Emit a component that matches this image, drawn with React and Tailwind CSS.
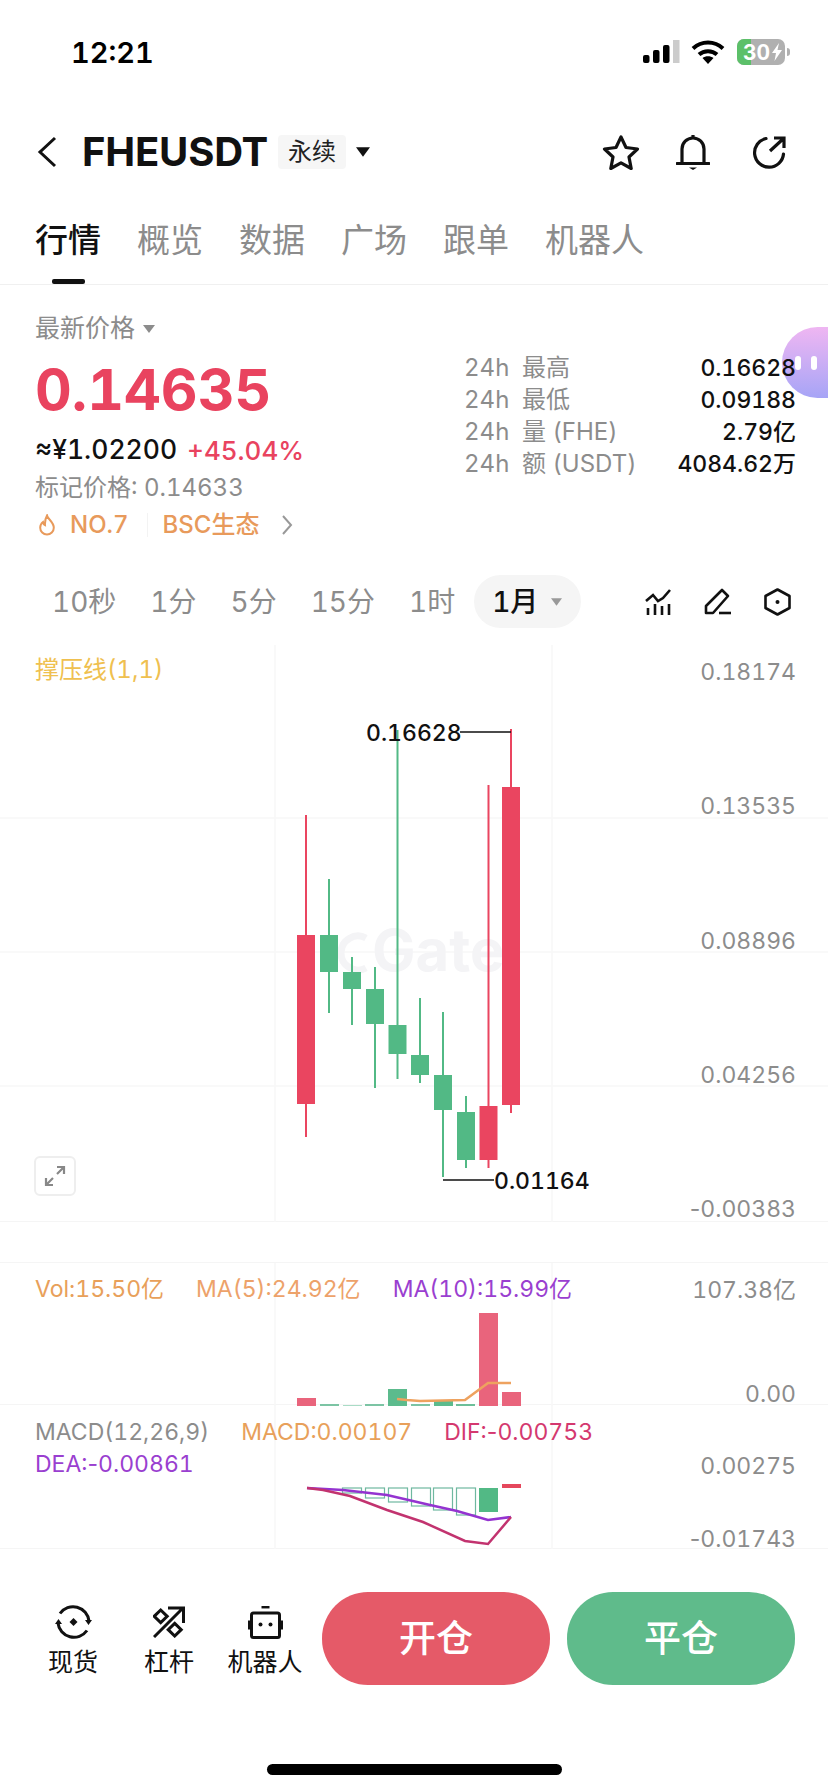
import React from "react";

const tabs = ["行情", "概览", "数据", "广场", "跟单", "机器人"];
const intervals = ["10秒", "1分", "5分", "15分", "1时"];
const stats = [
  { label: "最高", value: "0.16628" },
  { label: "最低", value: "0.09188" },
  { label: "量 (FHE)", value: "2.79亿" },
  { label: "额 (USDT)", value: "4084.62万" },
];

// x = wick centre, body top/bottom and wick top/bottom, all in page pixels
const candles = [
  { x: 306, top: 935, bottom: 1104, high: 815, low: 1137, up: true },
  { x: 329, top: 935, bottom: 972, high: 879, low: 1013 },
  { x: 352, top: 972, bottom: 989, high: 957, low: 1025 },
  { x: 375, top: 989, bottom: 1024, high: 967, low: 1088 },
  { x: 397.5, top: 1025, bottom: 1054, high: 730, low: 1079 },
  { x: 420, top: 1055, bottom: 1075, high: 998, low: 1083 },
  { x: 443, top: 1075, bottom: 1110, high: 1012, low: 1177 },
  { x: 466, top: 1112, bottom: 1160, high: 1096, low: 1168 },
  { x: 488.5, top: 1106, bottom: 1160, high: 785, low: 1168, up: true },
  { x: 511, top: 787, bottom: 1105, high: 729, low: 1113, up: true },
];

const volBars = [
  { x: 297, top: 1397, color: "#e9647c" },
  { x: 320, top: 1403, color: "#7cc4a4" },
  { x: 343, top: 1404, color: "#a9dcc6" },
  { x: 365, top: 1403, color: "#7cc4a4" },
  { x: 388, top: 1388, color: "#5cbb8d" },
  { x: 411, top: 1403, color: "#7cc4a4" },
  { x: 434, top: 1400, color: "#5cbb8d" },
  { x: 456, top: 1403, color: "#6cbf99" },
  { x: 479, top: 1312, color: "#e9647c" },
  { x: 502, top: 1391, color: "#e9647c" },
];

const macdBoxes = [
  { x: 342, bottom: 1493 },
  { x: 365, bottom: 1498 },
  { x: 388, bottom: 1502 },
  { x: 411, bottom: 1506 },
  { x: 433, bottom: 1510 },
  { x: 456, bottom: 1515 },
];

const Flame = () => (
  <svg width="18" height="22" viewBox="0 0 18 22" fill="none" stroke="#e89a5b" strokeWidth="2">
    <path d="M9 1.500c.6 3.400 6.800 6.600 6.800 12.200A6.800 6.800 0 0 1 9 20.500a6.800 6.800 0 0 1-6.800-6.800c0-2.600 1.300-4.500 2.800-5.700.3 1.600 1 2.500 2 3C6.800 7.500 7.500 4 9 1.500z" />
  </svg>
);

const Triangle = ({ className }) => (
  <svg className={className} viewBox="0 0 12 8">
    <path d="M0 0h12L6 8z" fill="currentColor" />
  </svg>
);

// Inter's tabular figures also widen the hyphen, so it is set apart
const Minus = () => <span className="normal-nums">-</span>;

const NavItem = ({ label, children }) => (
  <div className="w-[96px] self-stretch pt-[12px] flex flex-col items-center">
    <div className="h-[36px] flex items-center justify-center">{children}</div>
    <span className="mt-[7px] text-[25px] leading-[30px]">{label}</span>
  </div>
);

const App = () => {
  return (
    <div className="w-[828px] h-[1792px] bg-white overflow-hidden flex flex-col relative text-[#111] tabular-nums [font-family:Inter,'Noto_Sans_CJK_SC',sans-serif]">
      {/* status bar */}
      <div className="h-[104px] shrink-0 flex items-center justify-between pl-[71px] pr-[38px]">
        <span className="mt-[2px] text-[29px] font-semibold text-black">12:21</span>
        <div className="flex items-center">
          <svg width="37" height="24" viewBox="0 0 37 24" className="mr-[11px]">
            <rect x="0" y="15" width="6.500" height="8" rx="2" fill="#000" />
            <rect x="10" y="10" width="6.500" height="13" rx="2" fill="#000" />
            <rect x="20" y="5" width="6.500" height="18" rx="2" fill="#000" />
            <rect x="30" y="0" width="6.500" height="23" fill="#ccc" />
          </svg>
          <svg width="34" height="26" viewBox="0 0 34 26" className="mr-[12px]" fill="none" stroke="#000" strokeWidth="4">
            <path d="M2 9.500C10.500 1.500 23.500 1.500 32 9.500" />
            <path d="M8 15.500c5-4.500 13-4.500 18 0" />
            <path d="M17 25l-5.500-6c3-2.500 8-2.500 11 0z" fill="#000" stroke="none" />
          </svg>
          <div className="w-[48px] h-[26px] rounded-[7px] bg-[#b0b0b0] overflow-hidden relative flex items-center justify-center">
            <div className="absolute left-0 top-0 bottom-0 w-[14px] bg-[#5cc069]" />
            <span className="relative text-white text-[21px] font-bold leading-none -ml-[9px]">30</span>
            <svg width="10" height="18" viewBox="0 0 10 18" className="absolute right-[3px] top-[4px]">
              <path d="M7 0L0 10h4l-1.500 8L10 7H5.500z" fill="#fff" />
            </svg>
          </div>
          <div className="w-[3px] h-[8px] bg-[#b0b0b0] rounded-r-full ml-[2px]" />
        </div>
      </div>

      {/* header */}
      <div className="h-[96px] shrink-0 flex items-center pl-[37px] pr-[42px]">
        <svg width="20" height="32" viewBox="0 0 20 32" fill="none" stroke="#111" strokeWidth="3">
          <path d="M18 2L3 16l15 14" />
        </svg>
        <span className="ml-[25px] text-[40px] font-bold tracking-[-0.2px]">FHEUSDT</span>
        <span className="ml-[10px] h-[34px] w-[68px] bg-[#f6f6f6] rounded-[4px] flex items-center justify-center text-[24px] text-[#222]">永续</span>
        <Triangle className="ml-[10px] w-[14px] h-[10px] text-[#111]" />
        <div className="ml-auto flex items-center">
          <svg width="38" height="36" viewBox="0 0 38 36" fill="none" stroke="#111" strokeWidth="3.200" strokeLinejoin="round">
            <path d="M19 3l5 10.500 11.500 1.500-8.500 8 2.200 11.500L19 28.800 8.800 34.500 11 23l-8.500-8L14 13.500z" />
          </svg>
          <svg width="34" height="36" viewBox="0 0 34 36" fill="none" stroke="#111" strokeWidth="3.200" className="ml-[36px]">
            <path d="M6 29V15a11 11 0 0 1 22 0v14" />
            <path d="M1 29.500h32" strokeLinecap="round" />
            <path d="M17 1v3" />
            <path d="M13 33.500h8L17 36z" fill="#111" stroke="none" />
          </svg>
          <svg width="34" height="34" viewBox="0 0 34 34" fill="none" stroke="#111" strokeWidth="3.200" className="ml-[42px]">
            <path d="M14 3.500A14.500 14.500 0 1 0 31.500 19" strokeLinecap="round" />
            <path d="M18 16L31 4M22 3h10v10" />
          </svg>
        </div>
      </div>

      {/* tabs */}
      <div className="h-[85px] shrink-0 border-b border-[#f0f0f0] flex gap-[36px] pl-[35px] relative">
        {tabs.map((tab, i) => (
          <span
            key={tab}
            className={`text-[33px] leading-[80px] ${i === 0 ? "text-[#111] font-medium" : "text-[#8c8c8c]"}`}
          >
            {tab}
          </span>
        ))}
        <div className="absolute left-[52px] bottom-0 w-[33px] h-[5px] rounded-[2px] bg-[#111]" />
      </div>

      {/* price info */}
      <div className="h-[260px] shrink-0 flex justify-between pl-[35px] pr-[32px] relative">
        <div className="pt-[28px]">
          <div className="h-[32px] flex items-center text-[25px] text-[#8c8c8c]">
            最新价格
            <Triangle className="ml-[8px] w-[12px] h-[8px] text-[#8c8c8c]" />
          </div>
          <div className="mt-[6px] h-[78px] flex items-center text-[57px] font-bold text-[#e9435f]">0.14635</div>
          <div className="mt-[3px] h-[36px] flex items-center text-[26px] font-medium">
            <span className="text-[26.5px]">≈¥1.02200</span>
            <span className="ml-[10px] text-[#e9435f]">+45.04%</span>
          </div>
          <div className="h-[38px] pt-[1px] flex items-center text-[24px] text-[#8c8c8c]">标记价格: 0.14633</div>
          <div className="h-[38px] flex items-center text-[24px] text-[#e89a5b]">
            <span className="ml-[3px]"><Flame /></span>
            <span className="ml-[14px] font-medium">NO.7</span>
            <div className="ml-[18px] w-px h-[24px] bg-[#f3f3f3]" />
            <span className="ml-[15px] font-medium">BSC生态</span>
            <svg width="12" height="22" viewBox="0 0 12 22" fill="none" stroke="#999" strokeWidth="2" className="ml-[22px]">
              <path d="M2 2l8 9-8 9" />
            </svg>
          </div>
        </div>
        <div className="mt-[67px] w-[332px] text-[24px] relative z-10">
          {stats.map((row) => (
            <div key={row.label} className="h-[32px] flex items-center">
              <span className="w-[58px] text-[#8c8c8c]">24h</span>
              <span className="text-[#8c8c8c] text-[24px]">{row.label}</span>
              <span className="ml-auto text-[#111] text-[23px] font-medium">{row.value}</span>
            </div>
          ))}
        </div>
        <div className="absolute right-0 top-[42px] w-[46px] h-[71px] rounded-l-[36px] bg-gradient-to-b from-[#efb6f2] to-[#a6a4f6] flex items-center justify-center gap-[10px] pl-[2px]">
          <div className="w-[6px] h-[14px] rounded-full bg-white" />
          <div className="w-[6px] h-[14px] rounded-full bg-white" />
        </div>
      </div>

      {/* intervals */}
      <div className="mt-[30px] h-[53px] shrink-0 flex items-center pl-[52px] pr-[37px] gap-[34px] text-[28px] text-[#8c8c8c]">
        {intervals.map((item) => (
          <span key={item}>{item}</span>
        ))}
        <div className="-ml-[15px] h-[53px] w-[107px] rounded-full bg-[#f5f5f5] flex items-center pl-[18px] text-[#111] font-medium">
          1月
          <Triangle className="ml-[13px] w-[11px] h-[8px] text-[#999]" />
        </div>
        <div className="ml-auto flex items-center">
          <svg width="27" height="26" viewBox="0 0 27 26" fill="none" stroke="#111" strokeWidth="2.600">
            <path d="M1 12l7-6 5 6 5-3 7-8" />
            <path d="M3 19v7M10 15v11M17 17v9M24 15v11" />
          </svg>
          <svg width="28" height="28" viewBox="0 0 28 28" fill="none" stroke="#111" strokeWidth="2.600" strokeLinejoin="round" className="ml-[32px]">
            <path d="M2 25V18L18 2l6 6L9 25z" />
            <path d="M15 25h12" />
          </svg>
          <svg width="27" height="28" viewBox="0 0 27 28" fill="none" stroke="#111" strokeWidth="2.600" strokeLinejoin="round" className="ml-[32px]">
            <path d="M13.500 1.500L25.500 8v12l-12 6.500L1.500 20V8z" />
            <circle cx="13.500" cy="14" r="2" fill="#111" stroke="none" />
          </svg>
        </div>
      </div>

      {/* candle chart, 645 to 1222 on the page */}
      <div className="mt-[17px] h-[577px] shrink-0 relative border-b border-[#f5f5f5]">
        <svg width="828" height="577" viewBox="0 645 828 577" className="absolute inset-0">
          <g stroke="#f7f7f7" strokeWidth="1.500">
            <path d="M0 818H828M0 952H828M0 1086H828" />
            <path d="M275 645V1222M552 645V1222" />
          </g>
          <path d="M366 938a17 17 0 1 0 0 30" fill="none" stroke="#f4f4f6" strokeWidth="7" />
          <text x="372" y="971" fontSize="58" fontWeight="700" fill="#f4f4f6">Gate</text>
          {candles.map((c) => (
            <g key={c.x} fill={c.up ? "#ea4560" : "#52b985"} stroke="none">
              <rect x={c.x - 1} y={c.high} width="2" height={c.low - c.high} />
              <rect x={c.x - 9} y={c.top} width="18" height={c.bottom - c.top} />
            </g>
          ))}
          <path d="M460 732H511M443 1180H494" stroke="#111" strokeWidth="1.500" />
          <g fontSize="23" fill="#111" fontWeight="500">
            <text x="366" y="741">0.16628</text>
            <text x="494" y="1189">0.01164</text>
          </g>
        </svg>
        <div className="relative pl-[35px] pt-[7px] text-[24px] text-[#efc04f]">撑压线(1,1)</div>
        <div className="absolute right-[32px] top-[1px] -bottom-[1px] pt-[14px] pb-[1px] flex flex-col justify-between items-end text-[23px] leading-[24px] text-[#8c8c8c]">
          <span>0.18174</span>
          <span>0.13535</span>
          <span>0.08896</span>
          <span>0.04256</span>
          <span><Minus />0.00383</span>
        </div>
        <div className="absolute left-[34px] top-[511px] w-[42px] h-[40px] border-2 border-[#eeeeee] rounded-[6px] flex items-center justify-center">
          <svg width="22" height="22" viewBox="0 0 22 22" fill="none" stroke="#888" strokeWidth="2.200">
            <path d="M13 2h7v7M20 2l-7 7M9 20H2v-7M2 20l7-7" />
          </svg>
        </div>
      </div>

      {/* volume, 1262 to 1405 on the page */}
      <div className="mt-[40px] h-[143px] shrink-0 relative border-t border-b border-[#f5f5f5]">
        <svg width="828" height="143" viewBox="0 1262 828 143" className="absolute inset-0">
          <path d="M275 1262V1405M552 1262V1405" stroke="#f7f7f7" strokeWidth="1.500" />
          {volBars.map((b) => (
            <rect key={b.x} x={b.x} y={b.top} width="19" height={1405 - b.top} fill={b.color} />
          ))}
          <polyline points="397,1398 407,1399 420,1400 465,1399 488,1382 511,1382" fill="none" stroke="#eea25f" strokeWidth="2.500" />
        </svg>
        <div className="relative pl-[35px] pt-[9px] flex text-[23px] gap-[32px]">
          <span className="text-[#e8a05a]">Vol:15.50亿</span>
          <span className="text-[#eda26a]">MA(5):24.92亿</span>
          <span className="text-[#9a3fd0]">MA(10):15.99亿</span>
        </div>
        <div className="absolute right-[32px] top-[1px] -bottom-[2px] pt-[14px] flex flex-col justify-between items-end text-[23px] leading-[24px] text-[#8c8c8c]">
          <span>107.38亿</span>
          <span>0.00</span>
        </div>
      </div>

      {/* macd, 1405 to 1549 on the page */}
      <div className="h-[144px] shrink-0 relative border-b border-[#f5f5f5]">
        <svg width="828" height="144" viewBox="0 1405 828 144" className="absolute inset-0">
          <path d="M275 1405V1549M552 1405V1549" stroke="#f7f7f7" strokeWidth="1.500" />
          {macdBoxes.map((b) => (
            <rect key={b.x} x={b.x + 0.5} y="1488" width="19" height={b.bottom - 1488} fill="none" stroke="#6fb8a0" strokeWidth="1.200" />
          ))}
          <rect x="479" y="1488" width="19" height="24" fill="#52b985" />
          <rect x="502" y="1484" width="19" height="4" fill="#e5475c" />
          <polyline points="307,1488 343,1490 387,1495 430,1505 457,1511 488,1520 511,1517" fill="none" stroke="#9433d0" strokeWidth="2.500" />
          <polyline points="307,1488 323,1490 350,1496 387,1510 423,1522 465,1541 488,1544 511,1517" fill="none" stroke="#c2336f" strokeWidth="2.500" />
        </svg>
        <div className="relative pl-[35px] pt-[11px] flex flex-wrap w-[640px] text-[23px] leading-[32px] gap-x-[32px]">
          <span className="text-[#8c8c8c]">MACD(12,26,9)</span>
          <span className="text-[#e8a05a]">MACD:0.00107</span>
          <span className="text-[#d4386f]">DIF:<Minus />0.00753</span>
          <span className="text-[#9a3fd0]">DEA:<Minus />0.00861</span>
        </div>
        <div className="absolute right-[32px] top-[1px] -bottom-[2px] pt-[49px] flex flex-col justify-between items-end text-[23px] leading-[22px] text-[#8c8c8c]">
          <span>0.00275</span>
          <span><Minus />0.01743</span>
        </div>
      </div>

      {/* bottom actions */}
      <div className="mt-[43px] h-[93px] shrink-0 flex items-center pl-[25px] pr-[33px] relative">
        <NavItem label="现货">
          <svg width="37" height="36" viewBox="0 0 37 36" fill="none" stroke="#111" strokeWidth="3">
            <path d="M5 9.500A16 16 0 0 1 34 17" />
            <path d="M32 26.500A16 16 0 0 1 3 19" />
            <path d="M30 16h7l-3.500 5zM0 20h7L3.500 15z" fill="#111" stroke="none" />
            <path d="M18.500 14l4 4-4 4-4-4z" fill="#111" stroke="none" />
          </svg>
        </NavItem>
        <NavItem label="杠杆">
          <svg width="32" height="32" viewBox="0 0 32 32" fill="none" stroke="#111" strokeWidth="3">
            <path d="M1 31L30 2M15 2h15.500v15" />
            <path d="M7.700 4l6.500 6.300-6.500 6.300-6.500-6.300zM21.700 17.400l6.500 6.300-6.500 6.300-6.500-6.300z" />
          </svg>
        </NavItem>
        <NavItem label="机器人">
          <svg width="35" height="33" viewBox="0 0 35 33" fill="none" stroke="#111" strokeWidth="3">
            <rect x="3.500" y="7" width="28" height="24.500" rx="2" />
            <path d="M13.500 1.200h8" strokeWidth="2.500" />
            <path d="M1.200 14.500v9M33.800 14.500v9" strokeWidth="2.500" />
            <circle cx="12.500" cy="18.500" r="2" fill="#111" stroke="none" />
            <circle cx="22.500" cy="18.500" r="2" fill="#111" stroke="none" />
          </svg>
        </NavItem>
        <div className="ml-auto flex gap-[17px]">
          <div className="w-[228px] h-[93px] rounded-[46px] bg-[#e55a68] text-white text-[37px] font-medium flex items-center justify-center">开仓</div>
          <div className="w-[228px] h-[93px] rounded-[46px] bg-[#5fbb8b] text-white text-[37px] font-medium flex items-center justify-center">平仓</div>
        </div>
      </div>

      {/* home indicator */}
      <div className="mt-[79px] mx-auto w-[295px] h-[11px] rounded-full bg-black shrink-0" />
    </div>
  );
};

export default App;
